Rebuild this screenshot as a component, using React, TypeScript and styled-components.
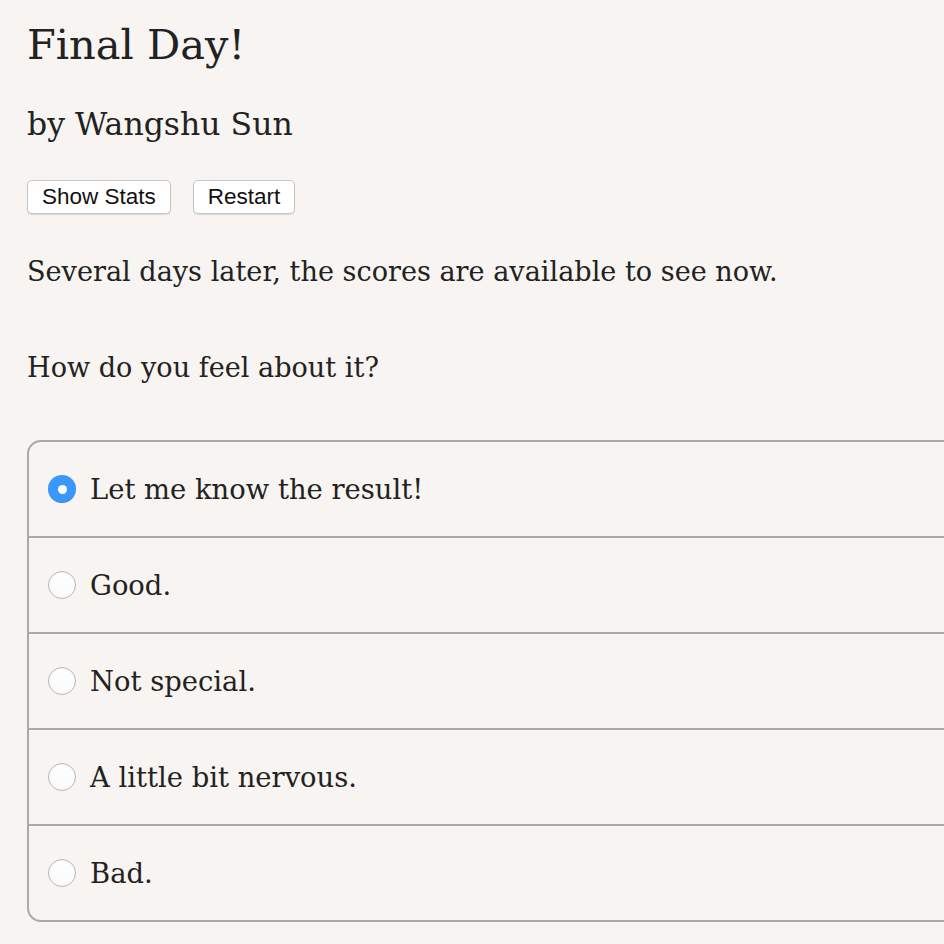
import React, { useState } from 'react';
import styled, { createGlobalStyle } from 'styled-components';

const GlobalStyle = createGlobalStyle`
  html, body {
    margin: 0;
    padding: 0;
    background: #f7f4f1;
    overflow: hidden;
  }
`;

const Page = styled.div`
  padding: 12px 0 0 27px;
  font-family: "DejaVu Serif", "Liberation Serif", serif;
  color: #222;
  width: 1000px;
`;

const Title = styled.h1`
  margin: 0;
  font-size: 41.5px;
  font-weight: normal;
  line-height: 66px;
`;

const Byline = styled.h2`
  margin: 26px 0 0;
  font-size: 31.5px;
  font-weight: normal;
  line-height: 40px;
`;

const Toolbar = styled.div`
  display: flex;
  gap: 22px;
  margin-top: 36px;
`;

const Button = styled.button`
  height: 34px;
  padding: 0 14px;
  background: #fff;
  border: 1px solid #c6c6c6;
  border-radius: 5px;
  box-shadow: 0 1px 1px rgba(0, 0, 0, 0.12);
  font-family: "Liberation Sans", Arial, sans-serif;
  font-size: 22.5px;
  color: #111;
`;

const Paragraph = styled.p`
  margin: 38px 0 0;
  font-size: 27.1px;
  line-height: 40px;
`;

const Question = styled(Paragraph)`
  margin-top: 56px;
`;

const Choices = styled.div`
  margin-top: 52px;
  width: 960px;
  border: 2px solid #aaa;
  border-radius: 14px;
`;

const Choice = styled.label<{ last?: boolean }>`
  display: flex;
  align-items: center;
  gap: 14px;
  height: 94px;
  padding-left: 19px;
  border-bottom: ${p => (p.last ? 'none' : '2px solid #aaa')};
  font-size: 27.4px;
  cursor: pointer;
`;

const Radio = styled.span<{ checked: boolean }>`
  box-sizing: border-box;
  width: 28px;
  height: 28px;
  border-radius: 50%;
  flex-shrink: 0;
  display: flex;
  align-items: center;
  justify-content: center;
  background: ${p => (p.checked ? '#3a97fb' : 'linear-gradient(#fff, #fafafa)')};
  border: ${p => (p.checked ? 'none' : '1px solid #b9b9b9')};
  box-shadow: ${p => (p.checked ? 'inset 0 -1px 1px rgba(0,0,0,0.1)' : 'inset 0 1px 1px rgba(0,0,0,0.05)')};

  &::after {
    content: '';
    display: ${p => (p.checked ? 'block' : 'none')};
    width: 9px;
    height: 9px;
    border-radius: 50%;
    background: #fff;
  }
`;

const options = [
  'Let me know the result!',
  'Good.',
  'Not special.',
  'A little bit nervous.',
  'Bad.',
];

export default function App() {
  const [picked, setPicked] = useState(0);

  return (
    <>
      <GlobalStyle />
      <Page>
        <Title>Final Day!</Title>
        <Byline>by Wangshu Sun</Byline>
        <Toolbar>
          <Button>Show Stats</Button>
          <Button>Restart</Button>
        </Toolbar>
        <Paragraph>Several days later, the scores are available to see now.</Paragraph>
        <Question>How do you feel about it?</Question>
        <Choices>
          {options.map((o, i) => (
            <Choice key={o} last={i === options.length - 1} onClick={() => setPicked(i)}>
              <Radio checked={picked === i} />
              {o}
            </Choice>
          ))}
        </Choices>
      </Page>
    </>
  );
}
